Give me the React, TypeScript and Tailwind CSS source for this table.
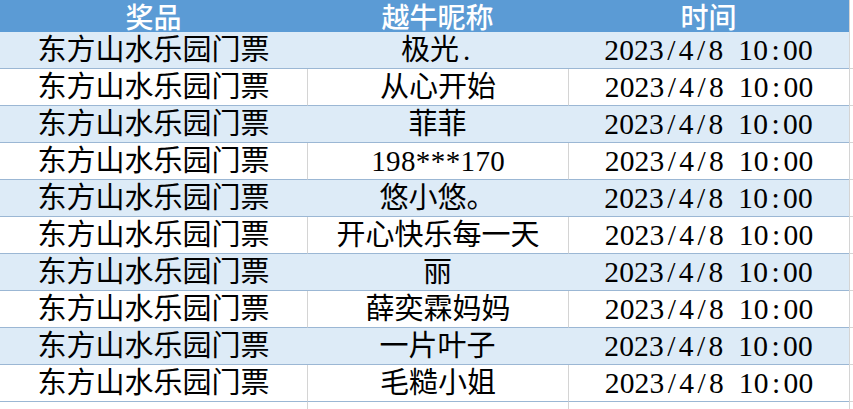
import React from 'react';

// Lignes du tableau des gagnants
const rows: { prize: string; nick: string; time: string }[] = [
  { prize: '东方山水乐园门票', nick: '极光.', time: '2023/4/8 10:00' },
  { prize: '东方山水乐园门票', nick: '从心开始', time: '2023/4/8 10:00' },
  { prize: '东方山水乐园门票', nick: '菲菲', time: '2023/4/8 10:00' },
  { prize: '东方山水乐园门票', nick: '198***170', time: '2023/4/8 10:00' },
  { prize: '东方山水乐园门票', nick: '悠小悠。', time: '2023/4/8 10:00' },
  { prize: '东方山水乐园门票', nick: '开心快乐每一天', time: '2023/4/8 10:00' },
  { prize: '东方山水乐园门票', nick: '丽', time: '2023/4/8 10:00' },
  { prize: '东方山水乐园门票', nick: '薛奕霖妈妈', time: '2023/4/8 10:00' },
  { prize: '东方山水乐园门票', nick: '一片叶子', time: '2023/4/8 10:00' },
  { prize: '东方山水乐园门票', nick: '毛糙小姐', time: '2023/4/8 10:00' },
];

const font = "font-['Liberation_Serif','Noto_Sans_CJK_SC',serif]";

// Caractères ASCII en demi-chasse (comme SimSun)
function HalfWidth({ text }: { text: string }) {
  return (
    <>
      {Array.from(text).map((ch, i) =>
        ch.charCodeAt(0) < 128 ? (
          <span key={i} className="inline-block w-[14.9px] text-center">
            {ch === ' ' ? '\u00a0' : ch}
          </span>
        ) : (
          <span key={i}>{ch}</span>
        )
      )}
    </>
  );
}

const App: React.FC = () => {
  return (
    <div className={`w-[853px] h-[409px] overflow-hidden bg-white text-black ${font}`}>
      {/* Header */}
      <div className="grid grid-cols-[307px_261px_281px_1fr] h-[32px]">
        {['奖品', '越牛昵称', '时间'].map((h) => (
          <div
            key={h}
            className="bg-[#5b9bd5] text-white text-[28px] leading-none flex items-center justify-center font-['Noto_Sans_CJK_SC',sans-serif] font-medium"
          >
            {h}
          </div>
        ))}
        <div className="border-l border-[#d4d4d4]" />
      </div>

      {/* Rows */}
      {rows.map((r, i) => {
        const striped = i % 2 === 0;
        const cell = striped
          ? 'bg-[#ddebf7] border-b border-[#9bb7d4]'
          : 'bg-white border-b border-[#9bb7d4]';
        const vline = striped ? '' : 'border-l border-l-[#d4d4d4]';
        return (
          <div key={i} className="grid grid-cols-[307px_261px_281px_1fr] h-[37px]">
            <div className={`${cell} text-[29px] leading-[36px] text-center`}>{r.prize}</div>
            <div className={`${cell} ${vline} text-[29px] leading-[36px] text-center whitespace-nowrap`}>
              <HalfWidth text={r.nick} />
            </div>
            <div className={`${cell} ${vline} text-[29.5px] leading-[36px] text-center whitespace-nowrap`}>
              <HalfWidth text={r.time} />
            </div>
            <div className="border-l border-[#d4d4d4] border-b border-b-[#d4d4d4]" />
          </div>
        );
      })}

      {/* Empty grid below */}
      <div className="grid grid-cols-[307px_261px_281px_1fr] h-[7px]">
        <div />
        <div className="border-l border-[#d4d4d4]" />
        <div className="border-l border-[#d4d4d4]" />
        <div className="border-l border-[#d4d4d4]" />
      </div>
    </div>
  );
};

export default App;
